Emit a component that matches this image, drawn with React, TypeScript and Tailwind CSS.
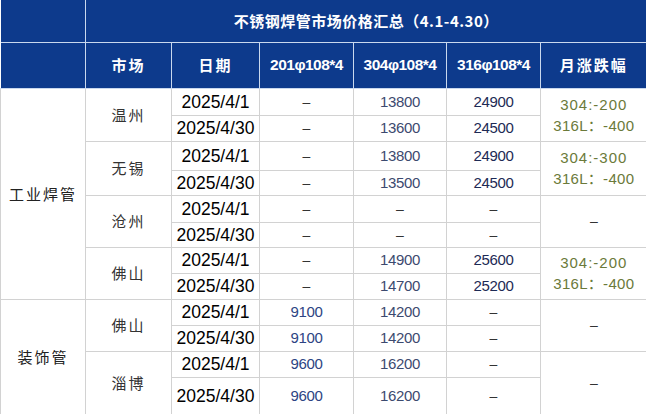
import React from "react";

type Row = {
  date: string;
  p201: string;
  p304: string;
  p316: string;
  h: string;
};

type Market = {
  name: string;
  rows: [Row, Row];
  change: string[];
};

type Group = {
  category: string;
  markets: Market[];
};

const DASH = "–";

const groups: Group[] = [
  {
    category: "工业焊管",
    markets: [
      {
        name: "温州",
        rows: [
          { date: "2025/4/1", p201: DASH, p304: "13800", p316: "24900", h: "h-[27px]" },
          { date: "2025/4/30", p201: DASH, p304: "13600", p316: "24500", h: "h-[26px]" },
        ],
        change: ["304:-200", "316L：-400"],
      },
      {
        name: "无锡",
        rows: [
          { date: "2025/4/1", p201: DASH, p304: "13800", p316: "24900", h: "h-[29px]" },
          { date: "2025/4/30", p201: DASH, p304: "13500", p316: "24500", h: "h-[25px]" },
        ],
        change: ["304:-300", "316L：-400"],
      },
      {
        name: "沧州",
        rows: [
          { date: "2025/4/1", p201: DASH, p304: DASH, p316: DASH, h: "h-[27px]" },
          { date: "2025/4/30", p201: DASH, p304: DASH, p316: DASH, h: "h-[25px]" },
        ],
        change: [DASH],
      },
      {
        name: "佛山",
        rows: [
          { date: "2025/4/1", p201: DASH, p304: "14900", p316: "25600", h: "h-[26px]" },
          { date: "2025/4/30", p201: DASH, p304: "14700", p316: "25200", h: "h-[26px]" },
        ],
        change: ["304:-200", "316L：-400"],
      },
    ],
  },
  {
    category: "装饰管",
    markets: [
      {
        name: "佛山",
        rows: [
          { date: "2025/4/1", p201: "9100", p304: "14200", p316: DASH, h: "h-[26px]" },
          { date: "2025/4/30", p201: "9100", p304: "14200", p316: DASH, h: "h-[26px]" },
        ],
        change: [DASH],
      },
      {
        name: "淄博",
        rows: [
          { date: "2025/4/1", p201: "9600", p304: "16200", p316: DASH, h: "h-[26px]" },
          { date: "2025/4/30", p201: "9600", p304: "16200", p316: DASH, h: "h-[37px]" },
        ],
        change: [DASH],
      },
    ],
  },
];

const cjk = "font-['Noto_Sans_CJK_SC',sans-serif]";
const latin = "font-['Liberation_Sans','Noto_Sans_CJK_SC',sans-serif]";
const bodyCell = "border border-[#d2d2d2] text-center align-middle p-0 leading-[18px]";
const headCell = "border border-[#c9d8ee] text-center align-middle p-0 text-white font-bold";

function Price({ value, color }: { value: string; color: string }) {
  if (value === DASH) {
    return <span className="text-[14px] text-[#333]">{DASH}</span>;
  }
  return <span className={`text-[15px] tracking-[-0.3px] ${color}`}>{value}</span>;
}

function Change({ lines }: { lines: string[] }) {
  if (lines.length === 1) {
    return <span className="text-[14px] text-[#333]">{lines[0]}</span>;
  }
  return (
    <div className="flex flex-col items-center text-[15px] leading-[21px] text-[#6b7a3a]">
      <span className="tracking-[1px]">{lines[0]}</span>
      <span className="tracking-[0.3px]">{lines[1]}</span>
    </div>
  );
}

export default function App() {
  return (
    <div className={`w-[646px] h-[414px] overflow-hidden bg-white ${latin}`}>
      <table className="w-[646px] table-fixed border-collapse">
        <colgroup>
          <col className="w-[85px]" />
          <col className="w-[86px]" />
          <col className="w-[88px]" />
          <col className="w-[94px]" />
          <col className="w-[93px]" />
          <col className="w-[94px]" />
          <col className="w-[106px]" />
        </colgroup>
        <thead className="bg-[#0d3a8c]">
          <tr className="h-[42px]">
            <th className={`${headCell} border-l-0 border-t-0`} />
            <th colSpan={6} className={`${headCell} border-t-0 border-r-0 ${cjk} text-[15px] tracking-[0.5px]`}>
              不锈钢焊管市场价格汇总（4.1-4.30）
            </th>
          </tr>
          <tr className="h-[46px]">
            <th className={`${headCell} border-l-0`} />
            <th className={`${headCell} ${cjk} text-[15px] tracking-[2px]`}>市场</th>
            <th className={`${headCell} ${cjk} text-[15px] tracking-[2px]`}>日期</th>
            <th className={`${headCell} text-[15.5px] tracking-[-0.5px]`}>201φ108*4</th>
            <th className={`${headCell} text-[15.5px] tracking-[-0.5px]`}>304φ108*4</th>
            <th className={`${headCell} text-[15.5px] tracking-[-0.5px]`}>316φ108*4</th>
            <th className={`${headCell} border-r-0 ${cjk} text-[15px] tracking-[2px]`}>月涨跌幅</th>
          </tr>
        </thead>
        <tbody>
          {groups.map((g) =>
            g.markets.map((m, mi) =>
              m.rows.map((r, ri) => (
                <tr key={`${g.category}-${m.name}-${ri}`} className={r.h}>
                  {mi === 0 && ri === 0 && (
                    <td
                      rowSpan={g.markets.length * 2}
                      className={`${bodyCell} ${cjk} text-[15px] text-[#222] tracking-[2px]`}
                    >
                      {g.category}
                    </td>
                  )}
                  {ri === 0 && (
                    <td rowSpan={2} className={`${bodyCell} ${cjk} text-[15px] text-[#333] tracking-[2px]`}>
                      {m.name}
                    </td>
                  )}
                  <td className={`${bodyCell} text-[17.5px] text-black`}>{r.date}</td>
                  <td className={bodyCell}>
                    <Price value={r.p201} color="text-[#2d4483]" />
                  </td>
                  <td className={bodyCell}>
                    <Price value={r.p304} color="text-[#3c4a6f]" />
                  </td>
                  <td className={bodyCell}>
                    <Price value={r.p316} color="text-[#1d2a55]" />
                  </td>
                  {ri === 0 && (
                    <td rowSpan={2} className={`${bodyCell} border-r-0`}>
                      <Change lines={m.change} />
                    </td>
                  )}
                </tr>
              ))
            )
          )}
        </tbody>
      </table>
    </div>
  );
}
